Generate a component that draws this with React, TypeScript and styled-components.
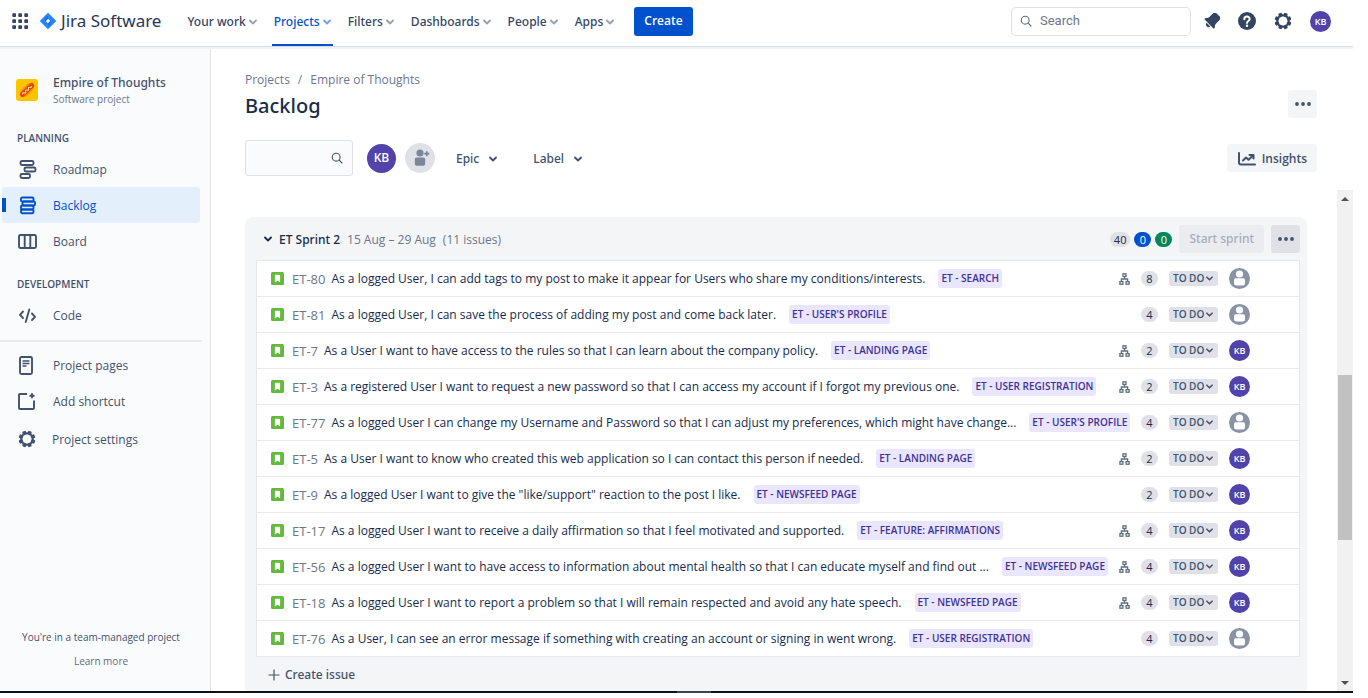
import React from "react";
import styled, { createGlobalStyle } from "styled-components";

const sans = `"Open Sans", "Noto Sans", "Liberation Sans", sans-serif`;
const medium = `"Noto Sans", "Open Sans", "Liberation Sans", sans-serif`;

const GlobalStyle = createGlobalStyle`
  *, *::before, *::after { box-sizing: border-box; }
  body { margin: 0; padding-right: 15px; background: #fff; color: #172b4d; font: 12px/20px ${sans}; }
  button, input, select { font: inherit; color: inherit; }
  button { border: 0; background: none; padding: 0; cursor: pointer; }
  a { color: inherit; text-decoration: none; }
  ul, ol { list-style: none; margin: 0; padding: 0; }
  h1, h2, h3, p { margin: 0; }
  svg { display: block; flex: none; }
`;

/* ---------- Icons ---------- */

const Chevron = ({ color = "#42526e", size = 8 }: { color?: string; size?: number }) => (
  <svg width={size} height={size} viewBox="0 0 8 8" fill="none" stroke={color} strokeWidth="1.8" strokeLinecap="round" strokeLinejoin="round" aria-hidden="true">
    <path d="M1 2.5 4 5.5 7 2.5" />
  </svg>
);

const SearchIcon = ({ color }: { color: string }) => (
  <svg width="12" height="12" viewBox="0 0 12 12" fill="none" stroke={color} strokeWidth="1.1" strokeLinecap="round" aria-hidden="true">
    <circle cx="5.2" cy="5.2" r="3.9" />
    <path d="M8.2 8.2 11 11" />
  </svg>
);

const GearIcon = ({ color = "#344563" }: { color?: string }) => (
  <svg width="18" height="18" viewBox="0 0 18 18" aria-hidden="true">
    <g fill={color}>
      {[22.5, 67.5, 112.5, 157.5, 202.5, 247.5, 292.5, 337.5].map((a) => (
        <rect key={a} x="7.1" y="0.6" width="3.8" height="4" rx="1" transform={`rotate(${a} 9 9)`} />
      ))}
    </g>
    <circle cx="9" cy="9" r="5.8" fill="none" stroke={color} strokeWidth="2" />
  </svg>
);

const AppsIcon = () => (
  <svg width="16" height="16" viewBox="0 0 16 16" fill="#344563" aria-hidden="true">
    {[0, 6, 12].map((y) => [0, 6, 12].map((x) => <rect key={`${x}-${y}`} x={x + 0.3} y={y + 0.3} width="3.7" height="3.7" rx="0.7" />))}
  </svg>
);

const JiraMark = () => (
  <svg width="16" height="18" viewBox="0 0 16 18" aria-hidden="true">
    <path fillRule="evenodd" fill="#2684ff" d="M8 .8 15.6 8.3a1 1 0 0 1 0 1.4L8 17.2.4 9.7a1 1 0 0 1 0-1.4ZM8 6.8 5.8 9 8 11.2 10.2 9Z" />
    <path fill="#0f5fd6" opacity=".6" d="M8 6.8 5.8 9C4.5 7.5 5.2 5 8 4ZM8 11.2 10.2 9C11.5 10.5 10.8 13 8 14Z" />
  </svg>
);

const BellIcon = () => (
  <svg width="16" height="16" viewBox="0 0 16 16" fill="#344563" aria-hidden="true">
    <g transform="rotate(45 8 8)">
      <path d="M5.2-.6h5.600c1.200 0 1.900 1 1.900 2.300V7.500c0 1.600 1.600 2.300 2 3.400.3.700-.1 1.300-.8 1.300H2.100c-.7 0-1.100-.6-.8-1.300.4-1.100 2-1.800 2-3.400V1.700C3.300.4 4-.6 5.200-.6Z" />
      <path d="M5.500 13.100h5A2.500 2.500 0 0 1 5.500 13.100Z" />
    </g>
  </svg>
);

const HelpIcon = () => (
  <svg width="18" height="18" viewBox="0 0 18 18" aria-hidden="true">
    <circle cx="9" cy="9" r="9" fill="#344563" />
    <path d="M6.300 7.300C6.300 3.500 11.800 3.700 11.700 7.100 11.600 9 9 8.900 9 11" fill="none" stroke="#fff" strokeWidth="1.9" strokeLinecap="round" />
    <circle cx="9" cy="13.7" r="1.2" fill="#fff" />
  </svg>
);

const HotdogIcon = () => (
  <svg width="22" height="22" viewBox="0 0 22 22" aria-hidden="true">
    <rect width="22" height="22" rx="3" fill="#ffc400" />
    <g transform="rotate(-44 11 11)">
      <rect x="3" y="7" width="16" height="8" rx="4" fill="#ff8b00" />
      <rect x="2" y="8.5" width="18" height="5" rx="2.5" fill="#e5480f" />
      <path d="M5 11.200q1-1.800 2 0t2 0 2 0 2 0 2 0 1.600-.4" fill="none" stroke="#ffe9a8" strokeWidth="1" />
    </g>
  </svg>
);

const navIcons: Record<string, React.ReactNode> = {
  roadmap: (
    <>
      <rect x="2.500" y="1" width="13" height="4" rx="1.500" />
      <rect x="6.500" y="7.500" width="11" height="4" rx="1.500" />
      <rect x="2.500" y="14" width="9.500" height="4" rx="1.500" />
    </>
  ),
  backlog: (
    <>
      <rect x="3" y="1.500" width="12.500" height="4" rx="1.200" />
      <rect x="4.500" y="5.500" width="12.500" height="4" rx="1.200" />
      <rect x="3" y="9.500" width="12.500" height="4" rx="1.200" />
      <rect x="3" y="13.500" width="12.500" height="3.800" rx="1.200" />
    </>
  ),
  board: (
    <>
      <rect x="1" y="3" width="17" height="13" rx="1.500" />
      <path d="M6.700 3v13M12.300 3v13" />
    </>
  ),
  code: <path d="M5 5.500 2 8.800 5 12M14 7.500 17 10.800 14 14M11.300 3.500 7.700 16" strokeLinecap="round" strokeLinejoin="round" />,
  pages: (
    <>
      <rect x="2" y="1" width="12" height="17" rx="1.500" />
      <path d="M4.500 5h7M4.500 7.500h7M4.500 10h4" strokeWidth="1.5" />
    </>
  ),
  shortcut: (
    <>
      <path d="M9 2H2A1 1 0 0 0 1 3V16a1 1 0 0 0 1 1h13a1 1 0 0 0 1-1V8.500" />
      <path d="M14 1.200v5M11.500 3.700h5" />
    </>
  ),
};

const NavIcon = ({ name }: { name: string }) =>
  name === "settings" ? (
    <GearIcon color="#42526e" />
  ) : (
    <svg width="19" height="19" viewBox="0 0 19 19" fill="none" stroke="currentColor" strokeWidth="1.9" aria-hidden="true">
      {navIcons[name]}
    </svg>
  );

const DotsIcon = () => (
  <svg width="16" height="4" viewBox="0 0 16 4" fill="#42526e" aria-hidden="true">
    <circle cx="2" cy="2" r="1.9" />
    <circle cx="8" cy="2" r="1.9" />
    <circle cx="14" cy="2" r="1.9" />
  </svg>
);

const InsightsIcon = () => (
  <svg width="18" height="14" viewBox="0 0 18 14" fill="none" stroke="#42526e" strokeWidth="2" strokeLinecap="round" strokeLinejoin="round" aria-hidden="true">
    <path d="M1 1v9.500a2 2 0 0 0 2 2h14" />
    <path d="M5 8.500 8 5.500 10.500 7.800 15 3.500M11.500 3H15.500V6.500" />
  </svg>
);

const AddPersonIcon = () => (
  <svg width="16" height="18" viewBox="0 0 16 18" fill="#7a869a" aria-hidden="true">
    <circle cx="6" cy="4" r="3.6" />
    <path d="M.8 10.300a1.800 1.800 0 0 1 1.800-1.800h6.800a1.800 1.800 0 0 1 1.800 1.800v3.900a2.600 2.600 0 0 1-2.600 2.600H3.400a2.600 2.600 0 0 1-2.600-2.600Z" />
    <path d="M12.800 2.200v5M10.300 4.700h5" stroke="#7a869a" strokeWidth="1.7" />
  </svg>
);

const StoryIcon = () => (
  <svg width="13" height="13" viewBox="0 0 13 13" role="img" aria-label="Story">
    <rect width="13" height="13" rx="1.5" fill="#63ba3c" />
    <path d="M4.500 3.300h4v6.200L6.500 7.700 4.500 9.500Z" fill="#fff" stroke="#fff" strokeWidth="1.2" strokeLinejoin="round" />
    <path d="M5.400 10V9.800L6.500 8.600 7.600 9.800V10Z" fill="#63ba3c" />
  </svg>
);

const ChildIcon = () => (
  <svg width="11" height="12" viewBox="0 0 11 12" fill="none" stroke="#5e6c84" strokeWidth="1.3" role="img" aria-label="Child issues">
    <rect x="4" y=".8" width="3" height="2.600" />
    <rect x=".9" y="8.600" width="3" height="2.600" />
    <rect x="7.100" y="8.600" width="3" height="2.600" />
    <path d="M5.500 3.400V6M2.400 8.600V6h6.200v2.600" />
  </svg>
);

const PersonIcon = () => (
  <svg width="21" height="21" viewBox="0 0 21 21" role="img" aria-label="Unassigned">
    <circle cx="10.5" cy="10.5" r="10.5" fill="#8993a4" />
    <circle cx="10.5" cy="6" r="3.6" fill="#fff" />
    <path d="M5 12a1.700 1.700 0 0 1 1.700-1.700h7.600a1.700 1.700 0 0 1 1.700 1.700v3a2.500 2.500 0 0 1-2.500 2.500h-6A2.500 2.500 0 0 1 5 15Z" fill="#fff" />
  </svg>
);

const PlusIcon = () => (
  <svg width="12" height="12" viewBox="0 0 12 12" stroke="#42526e" strokeWidth="1.2" aria-hidden="true">
    <path d="M6 .5v11M.5 6h11" />
  </svg>
);

/* ---------- Top bar ---------- */

const TopBar = styled.header`
  display: flex;
  align-items: center;
  height: 47px;
  padding: 0 22px 4px 12px;
  border-bottom: 1px solid #d8dbe2;
  box-shadow: 0 2px 0 #f1f2f4;
  position: relative;
`;

const Brand = styled.a`
  display: flex;
  align-items: center;
  gap: 5px;
  margin: 0 24px 0 12px;
  font: 17px/24px ${medium};
  color: #253858;
`;

const MainNav = styled.nav`
  display: flex;
  gap: 13px;
  height: 46px;
  margin-top: 4px;
`;

const NavButton = styled.button<{ $active?: boolean }>`
  display: flex;
  align-items: center;
  gap: 3px;
  padding: 0 2px;
  padding-bottom: ${(p) => (p.$active ? 1 : 3)}px;
  white-space: nowrap;
  font-family: ${medium};
  font-weight: 500;
  color: ${(p) => (p.$active ? "#0052cc" : "#344563")};
  border-bottom: ${(p) => (p.$active ? "2px solid #0052cc" : "0")};
`;

const CreateButton = styled.button`
  height: 29px;
  padding: 0 10px;
  margin-left: 18px;
  border-radius: 3px;
  background: #0052cc;
  color: #fff;
  font-weight: 600;
`;

const TopTools = styled.div`
  display: flex;
  align-items: center;
  gap: 18px;
  margin-left: auto;
`;

const GlobalSearch = styled.label`
  display: flex;
  align-items: center;
  gap: 8px;
  width: 180px;
  height: 29px;
  margin-right: -5px;
  padding: 0 8px;
  border: 1px solid #dfe1e6;
  border-radius: 5px;

  input {
    width: 100%;
    min-width: 0;
    padding: 0;
    border: 0;
    outline: 0;
    background: none;
    font: 13px/20px Roboto, "Liberation Sans", sans-serif;
  }
  input::placeholder { color: #6b778c; opacity: 1; }
`;

const Avatar = styled.span<{ $size: number }>`
  display: flex;
  align-items: center;
  justify-content: center;
  flex: none;
  width: ${(p) => p.$size}px;
  height: ${(p) => p.$size}px;
  border-radius: 50%;
  background: #5243aa;
  color: #fff;
  font-weight: 600;
  font-size: ${(p) => (p.$size > 24 ? 12 : 9)}px;
  line-height: 1;
`;

/* ---------- Sidebar ---------- */

const Body = styled.div`
  display: flex;
`;

const Sidebar = styled.aside`
  display: flex;
  flex-direction: column;
  flex: none;
  width: 211px;
  padding: 27px 8px 22px 0;
  background: #fafbfc;
  border-right: 1px solid #e1e3e8;
  color: #42526e;
`;

const Project = styled.div`
  display: flex;
  align-items: center;
  gap: 15px;
  padding: 0 0 0 16px;
  margin-bottom: 24px;
  h2 { font: 500 12px/18px ${medium}; }
  p { font-size: 10px; line-height: 14px; color: #6b778c; }
`;

const GroupTitle = styled.h3`
  padding-left: 17px;
  font-size: 10px;
  line-height: 16px;
  font-weight: 600;
`;

const SideList = styled.ul<{ $before?: number; $after?: number }>`
  padding: ${(p) => p.$before ?? 5}px 2px 0;
  margin-bottom: ${(p) => p.$after ?? 0}px;
`;

const SideLink = styled.a<{ $active?: boolean }>`
  display: flex;
  align-items: center;
  gap: 16px;
  height: 36px;
  padding-left: 16px;
  border-radius: 3px;
  color: ${(p) => (p.$active ? "#0052cc" : "#42526e")};
  background: ${(p) => (p.$active ? "linear-gradient(#0052cc, #0052cc) 0 50% / 4px 14px no-repeat #e4effc" : "none")};
`;

const SideLabel = styled.span`
  padding-top: 2px;
`;

const SideRule = styled.hr`
  width: 100%;
  height: 2px;
  margin: 0;
  border: 0;
  background: #e9ebee;
`;

const SideFooter = styled.div`
  display: flex;
  flex-direction: column;
  align-items: center;
  gap: 8px;
  margin-top: auto;
  font-size: 10px;
  line-height: 16px;
  color: #42526e;
  a { color: #5e6c84; }
`;

/* ---------- Content ---------- */

const Main = styled.main`
  flex: 1;
  min-width: 0;
  padding: 23px 0 0 34px;
`;

const PageHead = styled.div`
  display: flex;
  justify-content: space-between;
  align-items: flex-end;
  padding-right: 36px;
  h1 { font: 500 20px/32px ${medium}; }
`;

const HeadActions = styled.div`
  padding-bottom: 4px;
`;

const Crumbs = styled.ol`
  display: flex;
  gap: 8px;
  color: #6b778c;
`;

const SquareButton = styled.button<{ $dark?: boolean }>`
  display: flex;
  align-items: center;
  justify-content: center;
  width: 29px;
  height: 28px;
  border-radius: 3px;
  background: ${(p) => (p.$dark ? "#dfe1e6" : "#f4f5f7")};
`;

const Toolbar = styled.div`
  display: flex;
  align-items: center;
  height: 36px;
  margin: 18px 36px 14px 0;
`;

const BoardSearch = styled.label`
  display: flex;
  align-items: center;
  width: 108px;
  height: 36px;
  margin-right: 14px;
  padding: 0 9px;
  border: 1px solid #dfe1e6;
  border-radius: 3px;
  background: #fafbfc;
  input { flex: 1; min-width: 0; border: 0; outline: 0; background: none; }
`;

const AddPeople = styled.button`
  display: flex;
  align-items: center;
  justify-content: center;
  width: 30px;
  height: 30px;
  margin: 0 21px 0 9px;
  padding-left: 3px;
  border-radius: 50%;
  background: #dfe1e6;
`;

const FilterButton = styled.button`
  display: flex;
  align-items: center;
  gap: 10px;
  margin-right: 36px;
  padding-top: 2px;
  font-family: ${medium};
  font-weight: 500;
  color: #42526e;
`;

const InsightsButton = styled.button`
  display: flex;
  align-items: center;
  gap: 6px;
  height: 28px;
  margin-left: auto;
  padding: 1px 10px 0 11px;
  border-radius: 3px;
  background: #f4f5f7;
  font-weight: 600;
  color: #42526e;
`;

const BoardArea = styled.div`
  display: flex;
  gap: 30px;
`;

const Sprint = styled.section`
  flex: 1;
  min-width: 0;
  margin-top: 27px;
  padding: 0 7px 0 11px;
  border-radius: 8px 8px 0 0;
  background: #f4f5f7;
`;

const SprintHead = styled.div`
  display: flex;
  align-items: center;
  gap: 7px;
  height: 43px;
  padding-left: 8px;
`;

const SprintTitle = styled.div`
  display: flex;
  gap: 7px;
  padding-top: 2px;
  h2 { font: 500 12px/20px ${medium}; }
`;

const SprintMeta = styled.span`
  color: #6b778c;
`;

const Pills = styled.div`
  display: flex;
  gap: 4px;
  margin-left: auto;
  padding-top: 2px;
`;

const Pill = styled.span<{ $tone?: "blue" | "green" }>`
  min-width: 17px;
  padding: 0 4px;
  border-radius: 8px;
  text-align: center;
  font-size: 11px;
  line-height: 15px;
  color: ${(p) => (p.$tone ? "#fff" : "#172b4d")};
  background: ${(p) => (p.$tone === "blue" ? "#0052cc" : p.$tone === "green" ? "#00875a" : "#dfe1e6")};
`;

const StartButton = styled.button`
  height: 28px;
  padding: 0 10px;
  border-radius: 3px;
  background: #ebecf0;
  color: #a5adba;
  font-family: ${medium};
  font-weight: 500;
  &:disabled { cursor: default; }
`;

const IssueList = styled.ul`
  border: 1px solid #e6e8ec;
  border-top: 0;
  background: #fff;
`;

const IssueRow = styled.li`
  display: flex;
  align-items: center;
  height: 36px;
  padding: 0 49px 0 14px;
  border-top: 1px solid #e6e8ec;
`;

const IssueKey = styled.a`
  flex: none;
  margin: 0 6px 0 8px;
  font-size: 13px;
  color: #6b778c;
`;

const Summary = styled.span`
  flex: 0 1 auto;
  min-width: 0;
  overflow: hidden;
  white-space: nowrap;
  text-overflow: ellipsis;
`;

const EpicTag = styled.span`
  flex: none;
  margin-left: 13px;
  padding: 0 3px;
  border-radius: 3px;
  background: #eae6ff;
  color: #403294;
  font-size: 10px;
  line-height: 19px;
  font-weight: 600;
`;

const RowTools = styled.div`
  display: flex;
  align-items: center;
  flex: none;
  gap: 11px;
  margin-left: auto;
  padding-left: 8px;
`;

const StatusField = styled.label`
  display: flex;
  align-items: center;
  width: 49px;
  height: 15px;
  padding: 0 5px 0 4px;
  border-radius: 3px;
  background: #dfe1e6;
  color: #42526e;
  select {
    flex: 1;
    min-width: 0;
    height: 15px;
    padding: 0;
    border: 0;
    outline: 0;
    appearance: none;
    background: none;
    font-size: 10px;
    line-height: 15px;
    font-weight: 600;
  }
`;

const CreateIssue = styled.button`
  display: flex;
  align-items: center;
  gap: 5px;
  height: 34px;
  padding: 1px 0 0 12px;
  font-family: ${medium};
  font-weight: 500;
  color: #42526e;
`;

/* ---------- Scroll track and bottom edge ---------- */

const Track = styled.div`
  display: flex;
  flex-direction: column;
  align-items: center;
  flex: none;
  width: 16px;
  background: #f1f1f1;
`;

const Arrow = styled.span<{ $down?: boolean }>`
  display: flex;
  align-items: center;
  height: 17px;
  &::before {
    content: "";
    border: 4px solid transparent;
    border-top-width: ${(p) => (p.$down ? 4 : 0)}px;
    border-bottom-width: ${(p) => (p.$down ? 0 : 4)}px;
    border-${(p) => (p.$down ? "top" : "bottom")}-color: #505050;
  }
`;

const TrackPart = styled.span<{ $grow: number; $thumb?: boolean }>`
  flex: ${(p) => p.$grow} 0 0;
  width: 14px;
  background: ${(p) => (p.$thumb ? "#c1c1c1" : "none")};
`;

const BottomEdge = styled.div`
  height: 2px;
  background: #111;
  &::before {
    content: "";
    display: block;
    width: 34px;
    height: 2px;
    margin-left: 50%;
    background: #444;
  }
`;

/* ---------- Data ---------- */

type Issue = { key: string; text: string; epic: string; points: number; child?: boolean; mine?: boolean };

const issues: Issue[] = [
  { key: "ET-80", text: "As a logged User, I can add tags to my post to make it appear for Users who share my conditions/interests.", epic: "ET - SEARCH", points: 8, child: true },
  { key: "ET-81", text: "As a logged User, I can save the process of adding my post and come back later.", epic: "ET - USER'S PROFILE", points: 4 },
  { key: "ET-7", text: "As a User I want to have access to the rules so that I can learn about the company policy.", epic: "ET - LANDING PAGE", points: 2, child: true, mine: true },
  { key: "ET-3", text: "As a registered User I want to request a new password so that I can access my account if I forgot my previous one.", epic: "ET - USER REGISTRATION", points: 2, child: true, mine: true },
  { key: "ET-77", text: "As a logged User I can change my Username and Password so that I can adjust my preferences, which might have change...", epic: "ET - USER'S PROFILE", points: 4 },
  { key: "ET-5", text: "As a User I want to know who created this web application so I can contact this person if needed.", epic: "ET - LANDING PAGE", points: 2, child: true, mine: true },
  { key: "ET-9", text: "As a logged User I want to give the \"like/support\" reaction to the post I like.", epic: "ET - NEWSFEED PAGE", points: 2, mine: true },
  { key: "ET-17", text: "As a logged User I want to receive a daily affirmation so that I feel motivated and supported.", epic: "ET - FEATURE: AFFIRMATIONS", points: 4, child: true, mine: true },
  { key: "ET-56", text: "As a logged User I want to have access to information about mental health so that I can educate myself and find out ...", epic: "ET - NEWSFEED PAGE", points: 4, child: true, mine: true },
  { key: "ET-18", text: "As a logged User I want to report a problem so that I will remain respected and avoid any hate speech.", epic: "ET - NEWSFEED PAGE", points: 4, child: true, mine: true },
  { key: "ET-76", text: "As a User, I can see an error message if something with creating an account or signing in went wrong.", epic: "ET - USER REGISTRATION", points: 4 },
];

const topItems = ["Your work", "Projects", "Filters", "Dashboards", "People", "Apps"];

const SideItem = ({ icon, label, active }: { icon: string; label: string; active?: boolean }) => (
  <li>
    <SideLink href="#" $active={active} aria-current={active ? "page" : undefined}>
      <NavIcon name={icon} />
      <SideLabel>{label}</SideLabel>
    </SideLink>
  </li>
);

export default function App() {
  return (
    <>
      <GlobalStyle />
      <TopBar>
        <button aria-label="Switch to"><AppsIcon /></button>
        <Brand href="#"><JiraMark />Jira Software</Brand>
        <MainNav>
          {topItems.map((t) => {
            const active = t === "Projects";
            return (
              <NavButton key={t} $active={active}>
                {t}
                <Chevron color={active ? "#6ea3ec" : "#97a0af"} />
              </NavButton>
            );
          })}
        </MainNav>
        <CreateButton>Create</CreateButton>
        <TopTools>
          <GlobalSearch>
            <SearchIcon color="#5e6c84" />
            <input type="search" placeholder="Search" aria-label="Search" />
          </GlobalSearch>
          <button aria-label="Notifications"><BellIcon /></button>
          <button aria-label="Help"><HelpIcon /></button>
          <button aria-label="Settings"><GearIcon /></button>
          <Avatar $size={21}>KB</Avatar>
        </TopTools>
      </TopBar>

      <Body>
        <Sidebar>
          <Project>
            <HotdogIcon />
            <div>
              <h2>Empire of Thoughts</h2>
              <p>Software project</p>
            </div>
          </Project>
          <GroupTitle>PLANNING</GroupTitle>
          <SideList $after={17}>
            <SideItem icon="roadmap" label="Roadmap" />
            <SideItem icon="backlog" label="Backlog" active />
            <SideItem icon="board" label="Board" />
          </SideList>
          <GroupTitle>DEVELOPMENT</GroupTitle>
          <SideList $after={7}>
            <SideItem icon="code" label="Code" />
          </SideList>
          <SideRule />
          <SideList>
            <SideItem icon="pages" label="Project pages" />
            <SideItem icon="shortcut" label="Add shortcut" />
          </SideList>
          <SideList $before={2}>
            <SideItem icon="settings" label="Project settings" />
          </SideList>
          <SideFooter>
            <p>You're in a team-managed project</p>
            <a href="#">Learn more</a>
          </SideFooter>
        </Sidebar>

        <Main>
          <PageHead>
            <div>
              <Crumbs>
                <li><a href="#">Projects</a></li>
                <li aria-hidden="true">/</li>
                <li><a href="#">Empire of Thoughts</a></li>
              </Crumbs>
              <h1>Backlog</h1>
            </div>
            <HeadActions>
              <SquareButton aria-label="More actions"><DotsIcon /></SquareButton>
            </HeadActions>
          </PageHead>

          <Toolbar>
            <BoardSearch>
              <input type="text" aria-label="Search backlog" />
              <SearchIcon color="#42526e" />
            </BoardSearch>
            <Avatar $size={29}>KB</Avatar>
            <AddPeople aria-label="Add people"><AddPersonIcon /></AddPeople>
            <FilterButton>Epic<Chevron /></FilterButton>
            <FilterButton>Label<Chevron /></FilterButton>
            <InsightsButton><InsightsIcon />Insights</InsightsButton>
          </Toolbar>

          <BoardArea>
            <Sprint>
              <SprintHead>
                <Chevron color="#172b4d" />
                <SprintTitle>
                  <h2>ET Sprint 2</h2>
                  <SprintMeta>15 Aug – 29 Aug</SprintMeta>
                  <SprintMeta>(11 issues)</SprintMeta>
                </SprintTitle>
                <Pills>
                  <Pill>40</Pill>
                  <Pill $tone="blue">0</Pill>
                  <Pill $tone="green">0</Pill>
                </Pills>
                <StartButton disabled>Start sprint</StartButton>
                <SquareButton $dark aria-label="Sprint actions"><DotsIcon /></SquareButton>
              </SprintHead>
              <IssueList>
                {issues.map((issue) => (
                  <IssueRow key={issue.key}>
                    <StoryIcon />
                    <IssueKey href="#">{issue.key}</IssueKey>
                    <Summary>{issue.text}</Summary>
                    <EpicTag>{issue.epic}</EpicTag>
                    <RowTools>
                      {issue.child && <ChildIcon />}
                      <Pill>{issue.points}</Pill>
                      <StatusField>
                        <select aria-label={`Status of ${issue.key}`} defaultValue="TO DO">
                          <option>TO DO</option>
                        </select>
                        <Chevron size={7} />
                      </StatusField>
                      {issue.mine ? <Avatar $size={21}>KB</Avatar> : <PersonIcon />}
                    </RowTools>
                  </IssueRow>
                ))}
              </IssueList>
              <CreateIssue><PlusIcon />Create issue</CreateIssue>
            </Sprint>
            <Track aria-hidden="true">
              <Arrow />
              <TrackPart $grow={168} />
              <TrackPart $grow={165} $thumb />
              <TrackPart $grow={134} />
              <Arrow $down />
            </Track>
          </BoardArea>
        </Main>
      </Body>
      <BottomEdge />
    </>
  );
}
